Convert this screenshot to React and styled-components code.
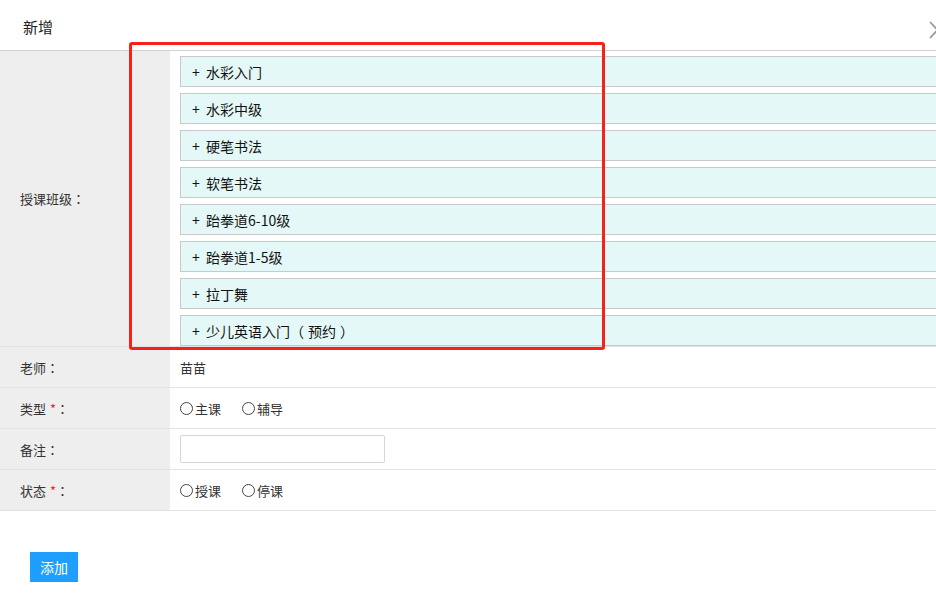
import React from "react";
import styled, { createGlobalStyle } from "styled-components";

const Global = createGlobalStyle`
  html, body { margin: 0; padding: 0; background: #fff; overflow: hidden; }
  body {
    font-family: "Noto Sans CJK SC", "Liberation Sans", sans-serif;
    color: #333;
    text-spacing-trim: space-all;
  }
  * { box-sizing: border-box; }
`;

const Page = styled.div`
  position: relative;
  width: 936px;
  height: 593px;
  overflow: hidden;
`;

const Header = styled.div`
  height: 51px;
  border-bottom: 1px solid #d2d2d2;
  display: flex;
  align-items: center;
  padding: 2px 0 0 23px;
  font-size: 15px;
  color: #222;
`;

const Close = styled.svg`
  position: absolute;
  left: 927px;
  top: 20px;
`;

const Table = styled.div`
  width: 980px;
  display: grid;
  grid-template-columns: 170px 1fr;
`;

const Label = styled.div`
  background: #eeeeee;
  display: flex;
  align-items: center;
  padding-left: 20px;
  font-size: 13px;
  color: #333;
  height: ${(p) => (p.$tall ? "auto" : "41px")};
  border-bottom: 1px solid #e2e2e2;
`;

const Punct = styled.span`
  font-family: "Noto Sans CJK TC", "Noto Sans CJK SC", sans-serif;
  padding: ${(p) => p.$pad || "0"};
`;

const Cell = styled.div`
  display: flex;
  align-items: center;
  padding-left: 10px;
  font-size: 13px;
  color: #333;
  height: 41px;
  border-bottom: 1px solid #e2e2e2;
`;

const ClassCell = styled.div`
  display: flex;
  flex-direction: column;
  gap: 6px;
  padding: 5px 0 0 10px;
  border-bottom: 1px solid #e2e2e2;
`;

const Item = styled.div`
  height: 31px;
  background: #e4f8f7;
  border: 1px solid #c9c9c9;
  display: flex;
  align-items: center;
  padding-left: 11px;
  font-size: 14px;
  color: #111;
  white-space: pre;
`;

const Star = styled.span`
  color: #ff1a1a;
  margin: 0 0 0 4px;
`;

const Radio = styled.label`
  display: inline-flex;
  align-items: center;
  margin-right: 21px;
  font-size: 13px;
  color: #333;
`;

const Circle = styled.span`
  width: 13px;
  height: 13px;
  border: 1px solid #444;
  border-radius: 50%;
  margin-right: 2px;
`;

const Input = styled.div`
  width: 205px;
  height: 28px;
  border: 1px solid #d6d6d6;
  border-radius: 2px;
  background: #fff;
`;

const Footer = styled.div`
  padding: 41px 0 0 30px;
`;

const Button = styled.button`
  width: 48px;
  height: 30px;
  border: none;
  background: #1e9fff;
  color: #fff;
  font-size: 14px;
  font-family: inherit;
  padding: 0;
`;

const Marker = styled.div`
  position: absolute;
  left: 129px;
  top: 42px;
  width: 476px;
  height: 308px;
  border: 3px solid #f5221b;
  border-radius: 3px;
  pointer-events: none;
`;

const classes = [
  "水彩入门",
  "水彩中级",
  "硬笔书法",
  "软笔书法",
  "跆拳道6-10级",
  "跆拳道1-5级",
  "拉丁舞",
];

const Colon = () => <Punct>：</Punct>;

export default function App() {
  return (
    <Page>
      <Global />
      <Header>新增</Header>
      <Close width="20" height="20" viewBox="0 0 20 20">
        <path d="M3 2 L18 18 M3 18 L18 2" stroke="#9a9a9a" strokeWidth="1.8" fill="none" />
      </Close>
      <Table>
        <Label $tall>
          授课班级<Colon />
        </Label>
        <ClassCell>
          {classes.map((c) => (
            <Item key={c}>{"+  " + c}</Item>
          ))}
          <Item>
            {"+  少儿英语入门"}
            <Punct $pad="0 4px 0 0">（</Punct>预约<Punct $pad="0 0 0 4px">）</Punct>
          </Item>
        </ClassCell>
        <Label>
          老师<Colon />
        </Label>
        <Cell>苗苗</Cell>
        <Label>
          类型<Star>*</Star>
          <Colon />
        </Label>
        <Cell>
          <Radio>
            <Circle />主课
          </Radio>
          <Radio>
            <Circle />辅导
          </Radio>
        </Cell>
        <Label>
          备注<Colon />
        </Label>
        <Cell>
          <Input />
        </Cell>
        <Label>
          状态<Star>*</Star>
          <Colon />
        </Label>
        <Cell>
          <Radio>
            <Circle />授课
          </Radio>
          <Radio>
            <Circle />停课
          </Radio>
        </Cell>
      </Table>
      <Footer>
        <Button>添加</Button>
      </Footer>
      <Marker />
    </Page>
  );
}
